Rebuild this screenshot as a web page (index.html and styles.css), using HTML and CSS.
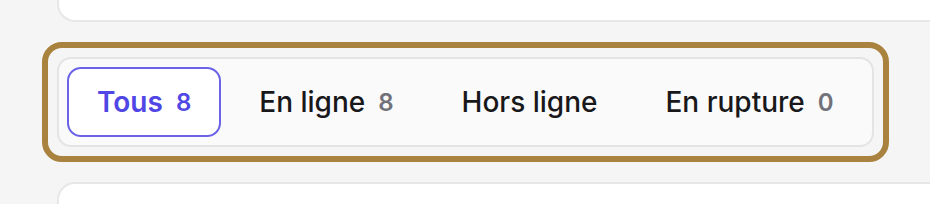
FILE: index.html
```html
<!DOCTYPE html>
<html lang="fr">
<head>
	<meta charset="UTF-8">
	<meta name="viewport" content="width=device-width, initial-scale=1.0">
	<title>Produits</title>
	<link rel="stylesheet" href="styles.css">
</head>
<body>
	<div class="page">
		<div class="card card-top"></div>
		<div class="focus-ring">
			<div class="tabs">
				<button class="tab active">Tous <span class="count">8</span></button>
				<button class="tab">En ligne <span class="count">8</span></button>
				<button class="tab">Hors ligne</button>
				<button class="tab">En rupture <span class="count">0</span></button>
			</div>
		</div>
		<div class="card card-bottom"></div>
	</div>
</body>
</html>
```

FILE: styles.css
```css
* {
	box-sizing: border-box;
}
html, body {
	margin: 0;
	height: 100%;
	overflow: hidden;
	background-color: #f5f5f5;
	font-family: Inter, "Noto Sans", sans-serif;
}
.page {
	display: flex;
	flex-direction: column;
	align-items: flex-start;
	gap: 20px;
	padding-left: 57px;
}
.card {
	width: 1000px;
	height: 100px;
	background-color: white;
	border: 2px solid #e7e7e7;
	border-radius: 18px;
}
.card-top {
	margin-top: -78px;
}
.focus-ring {
	margin-left: -15px;
	padding: 9px;
	border: 6px solid #a8823e;
	border-radius: 20px;
}
.tabs {
	display: flex;
	gap: 8px;
	padding: 8px;
	background-color: #fafafa;
	border: 2px solid #e4e4e7;
	border-radius: 14px;
}
.tab {
	display: flex;
	align-items: center;
	gap: 13px;
	height: 70px;
	padding: 0 28px;
	background: none;
	border: 2px solid transparent;
	border-radius: 14px;
	font-family: inherit;
	font-size: 28px;
	font-weight: 500;
	color: #18181b;
	cursor: pointer;
}
.tab .count {
	font-size: 24px;
	font-weight: 600;
	color: #71717a;
}
.tab.active {
	background-color: white;
	border-color: #6a63e6;
	color: #4f46e5;
	font-weight: 600;
}
.tab.active .count {
	color: #4f46e5;
}
```
